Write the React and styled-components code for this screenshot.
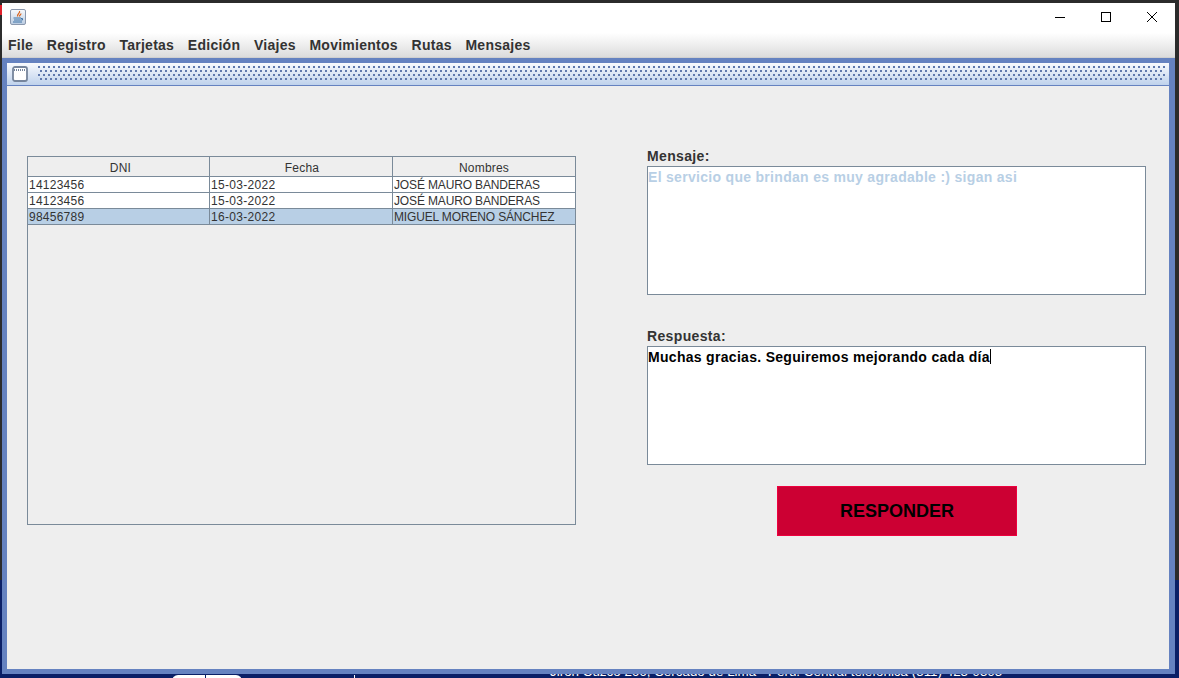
import React from 'react';
import styled, { createGlobalStyle } from 'styled-components';

const GlobalStyle = createGlobalStyle`
  html, body {
    margin: 0;
    padding: 0;
    overflow: hidden;
    background: #2b2b2b;
    font-family: "Liberation Sans", Arial, sans-serif;
  }
`;

const Desktop = styled.div`
  position: relative;
  width: 1179px;
  height: 678px;
  overflow: hidden;
  background: linear-gradient(#2b2b2b 0, #2b2b2b 580px, #0a1f66 580px);
`;

const BackMark = styled.div`
  position: absolute;
  left: 0;
  top: 5px;
  width: 2px;
  height: 10px;
  background: #e0202a;
`;

const BackTab = styled.div`
  position: absolute;
  left: ${(p) => p.$left}px;
  top: 675px;
  width: ${(p) => p.$width}px;
  height: 6px;
  background: #fff;
  border-radius: ${(p) => p.$radius};
`;

const BackRule = styled.div`
  position: absolute;
  left: 354px;
  top: 675px;
  width: 1px;
  height: 3px;
  background: #fff;
`;

const BackFooter = styled.div`
  position: absolute;
  left: 550px;
  top: 664px;
  font-size: 13.4px;
  line-height: 16px;
  color: #fff;
  white-space: nowrap;
`;

const AppWindow = styled.div`
  position: absolute;
  left: 2px;
  top: 3px;
  width: 1173px;
  height: 671px;
  display: flex;
  flex-direction: column;
  background: #fff;
`;

const TitleBar = styled.div`
  height: 30px;
  flex: none;
  display: flex;
  align-items: center;
  justify-content: space-between;
  padding-left: 8px;
  background: #fff;
`;

const JavaIcon = styled.div`
  width: 16px;
  height: 16px;
  border: 1px solid #8b98ad;
  border-radius: 2px;
  box-sizing: border-box;
  background: linear-gradient(#f6f8fb, #bccde2);
  display: flex;
  margin-top: -2px;
`;

const WindowControls = styled.div`
  display: flex;
`;

const ControlButton = styled.div`
  width: 46px;
  height: 30px;
  display: flex;
  align-items: center;
  justify-content: center;
  margin-top: -2px;
`;

const MenuBar = styled.div`
  height: 25px;
  flex: none;
  display: flex;
  align-items: center;
  gap: 13.7px;
  padding: 0 6px 1px;
  box-sizing: border-box;
  background: linear-gradient(#ffffff, #dcdcdc);
  border-bottom: 1px solid #d0d0d0;
`;

const MenuItem = styled.span`
  font-size: 14px;
  font-weight: 700;
  letter-spacing: 0.26px;
  color: #333;
`;

const InternalFrame = styled.div`
  flex: 1;
  display: flex;
  flex-direction: column;
  border: 5px solid #6582c0;
  border-right-width: 6px;
  background: #eeeeee;
  min-height: 0;
`;

const FrameTitle = styled.div`
  height: 23px;
  flex: none;
  box-sizing: border-box;
  display: flex;
  align-items: center;
  gap: 10px;
  padding: 0 4px 0 5px;
  background: linear-gradient(#f8fafe, #bfd2ec);
  border-bottom: 1px solid #6582c0;
`;

const Bumps = styled.div`
  flex: 1;
  height: 16px;
  background-image:
    radial-gradient(circle at 1px 1px, #5f78ad 0.8px, transparent 1.1px),
    radial-gradient(circle at 1px 1px, #5f78ad 0.8px, transparent 1.1px);
  background-size: 5px 8px;
  background-position: 0 0, 2px 4px;
`;

const FrameBody = styled.div`
  flex: 1;
  display: flex;
  gap: 71px;
  padding: 61px 0 0 20px;
  min-height: 0;
`;

const TablePane = styled.div`
  width: 549px;
  height: 369px;
  margin-top: 9px;
  box-sizing: border-box;
  border: 1px solid #7a8a99;
  border-top: 0;
  flex: none;
`;

const Row = styled.div`
  display: grid;
  grid-template-columns: 181px 183px 1fr;
  height: ${(p) => (p.$head ? 21 : 16)}px;
  box-sizing: border-box;
  font-size: 12px;
  color: #333;
  background: ${(p) => (p.$selected ? '#b8cfe5' : p.$head ? '#eeeeee' : '#fff')};
  border-bottom: 1px solid #7a8a99;
  border-top: ${(p) => (p.$head ? '1px solid #7a8a99' : '0')};
`;

const HeadCell = styled.div`
  text-align: center;
  line-height: 22px;
  letter-spacing: 0.2px;
  padding-left: ${(p) => p.$inset}px;
  border-left: 1px solid #7a8a99;
  &:first-child { border-left: 0; }
`;

const Cell = styled.div`
  padding: 1px 0 0 1px;
  line-height: 14px;
  letter-spacing: ${(p) => p.$spacing}px;
  white-space: nowrap;
  overflow: hidden;
  border-left: 1px solid #7a8a99;
  &:first-child { border-left: 0; }
`;

const FormColumn = styled.div`
  width: 499px;
  flex: none;
  display: flex;
  flex-direction: column;
`;

const FieldLabel = styled.div`
  font-size: 14px;
  font-weight: 700;
  line-height: 18px;
  letter-spacing: 0.35px;
  margin-bottom: 1px;
  color: #333;
`;

const TextBox = styled.div`
  height: ${(p) => p.$height}px;
  margin-bottom: ${(p) => p.$gap}px;
  box-sizing: border-box;
  border: 1px solid #7a8a99;
  background: #fff;
  padding: 2px 0 0 0;
  font-size: 14px;
  font-weight: 700;
  line-height: 17px;
  letter-spacing: 0.3px;
  color: ${(p) => p.$color};
`;

const Caret = styled.span`
  display: inline-block;
  width: 1px;
  height: 15px;
  background: #000;
  vertical-align: -2px;
`;

const ReplyButton = styled.div`
  width: 240px;
  height: 50px;
  margin: 21px 0 0 130px;
  padding-top: 1px;
  box-sizing: border-box;
  display: flex;
  align-items: center;
  justify-content: center;
  background: #cc0033;
  border: 1px solid #ee003e;
  font-size: 18px;
  font-weight: 700;
  color: #000;
`;

const rows = [
  ['14123456', '15-03-2022', 'JOSÉ MAURO BANDERAS'],
  ['14123456', '15-03-2022', 'JOSÉ MAURO BANDERAS'],
  ['98456789', '16-03-2022', 'MIGUEL MORENO SÁNCHEZ'],
];

const menus = ['File', 'Registro', 'Tarjetas', 'Edición', 'Viajes', 'Movimientos', 'Rutas', 'Mensajes'];

export default function App() {
  return (
    <Desktop>
      <GlobalStyle />
      <BackMark />
      <BackTab $left={172} $width={33} $radius="8px 0 0 0" />
      <BackTab $left={206} $width={36} $radius="0 8px 0 0" />
      <BackRule />
      <BackFooter>Jirón Cuzco 266, Cercado de Lima - Perú. Central telefónica (511) 425-9595</BackFooter>
      <AppWindow>
        <TitleBar>
          <JavaIcon>
            <svg width="14" height="14" viewBox="0 0 14 14">
              <path d="M8.5 1C9.5 3 6 3.5 6.5 6.5M10 3.5C10 5 8 5 8.5 6.5" stroke="#d9641e" strokeWidth="1.2" fill="none" />
              <path d="M2.5 8h7.5M3 10h6.5M2 12h9M10 8.5h1.5v1.5h-2" stroke="#3f74a8" strokeWidth="1" fill="none" />
            </svg>
          </JavaIcon>
          <WindowControls>
            <ControlButton>
              <svg width="12" height="12" viewBox="0 0 12 12"><path d="M1 6.5h10" stroke="#000" /></svg>
            </ControlButton>
            <ControlButton>
              <svg width="12" height="12" viewBox="0 0 12 12"><rect x="1.5" y="1.5" width="9" height="9" fill="none" stroke="#000" /></svg>
            </ControlButton>
            <ControlButton>
              <svg width="12" height="12" viewBox="0 0 12 12"><path d="M1 1l10 10M11 1L1 11" stroke="#000" /></svg>
            </ControlButton>
          </WindowControls>
        </TitleBar>
        <MenuBar>
          {menus.map((m) => <MenuItem key={m}>{m}</MenuItem>)}
        </MenuBar>
        <InternalFrame>
          <FrameTitle>
            <svg width="16" height="16" viewBox="0 0 16 16">
              <rect x="1" y="1" width="14" height="14" rx="2" fill="#fff" stroke="#76859c" strokeWidth="1.8" />
              <path d="M2 4h12" stroke="#76859c" strokeWidth="2" strokeDasharray="1 1" />
            </svg>
            <Bumps />
          </FrameTitle>
          <FrameBody>
            <TablePane>
              <Row $head>
                <HeadCell $inset={4}>DNI</HeadCell>
                <HeadCell $inset={2}>Fecha</HeadCell>
                <HeadCell $inset={0}>Nombres</HeadCell>
              </Row>
              {rows.map((r, i) => (
                <Row key={i} $selected={i === 2}>
                  <Cell $spacing={0.25}>{r[0]}</Cell>
                  <Cell $spacing={0.3}>{r[1]}</Cell>
                  <Cell $spacing={-0.15}>{r[2]}</Cell>
                </Row>
              ))}
            </TablePane>
            <FormColumn>
              <FieldLabel>Mensaje:</FieldLabel>
              <TextBox $height={129} $gap={32} $color="#b8cfe5">El servicio que brindan es muy agradable :) sigan asi</TextBox>
              <FieldLabel>Respuesta:</FieldLabel>
              <TextBox $height={119} $gap={0} $color="#000">Muchas gracias. Seguiremos mejorando cada día<Caret /></TextBox>
              <ReplyButton>RESPONDER</ReplyButton>
            </FormColumn>
          </FrameBody>
        </InternalFrame>
      </AppWindow>
    </Desktop>
  );
}
